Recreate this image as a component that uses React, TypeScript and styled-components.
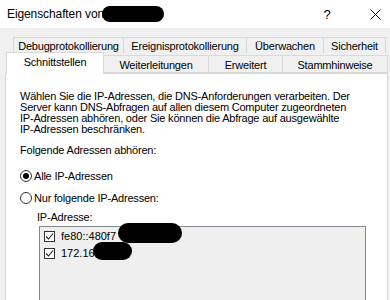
import React from "react";
import styled, { createGlobalStyle } from "styled-components";

const Global = createGlobalStyle`
  html, body { margin: 0; padding: 0; background: #f0f0f0; }
  body { width: 390px; height: 300px; overflow: hidden; font-family: "Liberation Sans", Arial, sans-serif; font-size: 11px; color: #000; }
`;

const Window = styled.div`
  width: 390px;
  height: 300px;
  display: flex;
  flex-direction: column;
  background: #f0f0f0;
  overflow: hidden;
`;

const TitleBar = styled.div`
  height: 28px;
  background: #fff;
  display: flex;
  align-items: center;
  padding-left: 7px;
  flex-shrink: 0;
`;

const TitleText = styled.span`
  font-size: 12px;
  display: flex;
  align-items: center;
  letter-spacing: -0.1px;
`;

const Blob = styled.span<{ $w: number; $h: number }>`
  display: inline-block;
  width: ${(p) => p.$w}px;
  height: ${(p) => p.$h}px;
  background: #000;
  border-radius: ${(p) => p.$h / 2}px;
`;

const TitleButtons = styled.div`
  margin-left: auto;
  display: flex;
  align-items: center;
  gap: 18px;
`;

const TitleButton = styled.div`
  width: 30px;
  display: flex;
  justify-content: center;
  align-items: center;
  font-size: 13px;
`;

const Tabs = styled.div`
  margin-top: 9px;
  padding-left: 6px;
  display: flex;
  flex-direction: column;
`;

const TabRow1 = styled.div`
  display: flex;
  margin-left: 7px;
  height: 16px;
`;

const TabRow2 = styled.div`
  display: flex;
  height: 21px;
  margin-top: -1px;
  align-items: flex-end;
  position: relative;
  z-index: 1;
`;

const Tab = styled.div<{ $w: number; $active?: boolean; $first?: boolean }>`
  box-sizing: border-box;
  width: ${(p) => p.$w}px;
  height: ${(p) => (p.$active ? 22 : 18)}px;
  border: 1px solid #d9d9d9;
  border-left-width: ${(p) => (p.$first ? 1 : 0)}px;
  border-bottom: ${(p) => (p.$active ? "none" : "1px solid #d9d9d9")};
  background: ${(p) => (p.$active ? "#fff" : "#f0f0f0")};
  display: flex;
  align-items: center;
  justify-content: center;
  padding-top: ${(p) => (p.$active ? 0 : 1)}px;
  padding-bottom: ${(p) => (p.$active ? 4 : 0)}px;
  margin-bottom: ${(p) => (p.$active ? -1 : 0)}px;
  letter-spacing: -0.2px;
  white-space: nowrap;
`;

const TopTab = styled.div<{ $w: number; $first?: boolean }>`
  box-sizing: border-box;
  width: ${(p) => p.$w}px;
  height: 16px;
  border: 1px solid #d9d9d9;
  border-left-width: ${(p) => (p.$first ? 1 : 0)}px;
  border-bottom: none;
  background: #f0f0f0;
  display: flex;
  align-items: center;
  justify-content: center;
  letter-spacing: -0.2px;
  white-space: nowrap;
`;

const Panel = styled.div`
  flex: 1;
  margin: 0 2px 0 5px;
  background: #fff;
  border: 1px solid #d9d9d9;
  border-bottom: none;
  padding: 17px 14px 0 14px;
  display: flex;
  flex-direction: column;
`;

const Para = styled.div`
  display: flex;
  flex-direction: column;
`;

const ParaLine = styled.span`
  line-height: 11px;
  white-space: nowrap;
  letter-spacing: -0.2px;
`;

const Label = styled.div<{ $indent?: number; $top: number }>`
  margin-top: ${(p) => p.$top}px;
  margin-left: ${(p) => p.$indent || 0}px;
  line-height: 12px;
  letter-spacing: -0.2px;
`;

const RadioRow = styled.div<{ $top: number }>`
  margin-top: ${(p) => p.$top}px;
  display: flex;
  align-items: center;
  gap: 2px;
  line-height: 12px;
  letter-spacing: -0.2px;
`;

const RadioCircle = styled.span<{ $checked?: boolean }>`
  box-sizing: border-box;
  width: 12px;
  height: 12px;
  border-radius: 50%;
  border: 1px solid #333;
  background: #fff;
  display: flex;
  align-items: center;
  justify-content: center;
  &::after {
    content: "";
    display: ${(p) => (p.$checked ? "block" : "none")};
    width: 6px;
    height: 6px;
    border-radius: 50%;
    background: #000;
  }
`;

const ListBox = styled.div`
  margin-top: 3px;
  margin-left: 19px;
  width: 327px;
  flex: 1;
  box-sizing: border-box;
  border: 1px solid #828790;
  border-bottom: none;
  background: #efefef;
  padding: 2px 0 0 4px;
  display: flex;
  flex-direction: column;
  gap: 3px;
`;

const ListItem = styled.div`
  position: relative;
  display: flex;
  align-items: center;
  gap: 6px;
  height: 14px;
`;

const CheckBox = styled.span`
  box-sizing: border-box;
  width: 11px;
  height: 11px;
  border: 1px solid #333;
  background: #fff;
  display: flex;
  align-items: center;
  justify-content: center;
`;

const Redact = styled.span<{ $x: number; $y: number; $w: number; $h: number }>`
  position: absolute;
  left: ${(p) => p.$x}px;
  top: ${(p) => p.$y}px;
  width: ${(p) => p.$w}px;
  height: ${(p) => p.$h}px;
  background: #000;
  border-radius: ${(p) => p.$h / 2}px;
`;

const Check = () => (
  <svg width="9" height="9" viewBox="0 0 9 9">
    <path d="M1 4.5 L3.5 7 L8 1.5" fill="none" stroke="#222" strokeWidth="1.1" />
  </svg>
);

const CloseIcon = () => (
  <svg width="11" height="11" viewBox="0 0 11 11">
    <path d="M0.5 0.5 L10.5 10.5 M10.5 0.5 L0.5 10.5" stroke="#000" strokeWidth="1" />
  </svg>
);

export default function App() {
  return (
    <>
      <Global />
      <Window>
        <TitleBar>
          <TitleText>
            Eigenschaften von
            <Blob $w={62} $h={16} style={{ marginLeft: -2 }} />
          </TitleText>
          <TitleButtons>
            <TitleButton>?</TitleButton>
            <TitleButton>
              <CloseIcon />
            </TitleButton>
          </TitleButtons>
        </TitleBar>
        <Tabs>
          <TabRow1>
            <TopTab $w={111} $first>Debugprotokollierung</TopTab>
            <TopTab $w={123}>Ereignisprotokollierung</TopTab>
            <TopTab $w={77}>Überwachen</TopTab>
            <TopTab $w={62}>Sicherheit</TopTab>
          </TabRow1>
          <TabRow2>
            <Tab $w={98} $active $first>Schnittstellen</Tab>
            <Tab $w={105}>Weiterleitungen</Tab>
            <Tab $w={74}>Erweitert</Tab>
            <Tab $w={105}>Stammhinweise</Tab>
          </TabRow2>
        </Tabs>
        <Panel>
          <Para>
            <ParaLine>Wählen Sie die IP-Adressen, die DNS-Anforderungen verarbeiten. Der</ParaLine>
            <ParaLine>Server kann DNS-Abfragen auf allen diesem Computer zugeordneten</ParaLine>
            <ParaLine>IP-Adressen abhören, oder Sie können die Abfrage auf ausgewählte</ParaLine>
            <ParaLine>IP-Adressen beschränken.</ParaLine>
          </Para>
          <Label $top={9}>Folgende Adressen abhören:</Label>
          <RadioRow $top={14}>
            <RadioCircle $checked />
            Alle IP-Adressen
          </RadioRow>
          <RadioRow $top={10}>
            <RadioCircle />
            Nur folgende IP-Adressen:
          </RadioRow>
          <Label $top={7} $indent={17}>IP-Adresse:</Label>
          <ListBox>
            <ListItem>
              <CheckBox>
                <Check />
              </CheckBox>
              fe80::480f7
              <Redact $x={74} $y={-6} $w={64} $h={20} />
            </ListItem>
            <ListItem>
              <CheckBox>
                <Check />
              </CheckBox>
              172.16
              <Redact $x={49} $y={-4} $w={39} $h={18} />
            </ListItem>
          </ListBox>
        </Panel>
      </Window>
    </>
  );
}
